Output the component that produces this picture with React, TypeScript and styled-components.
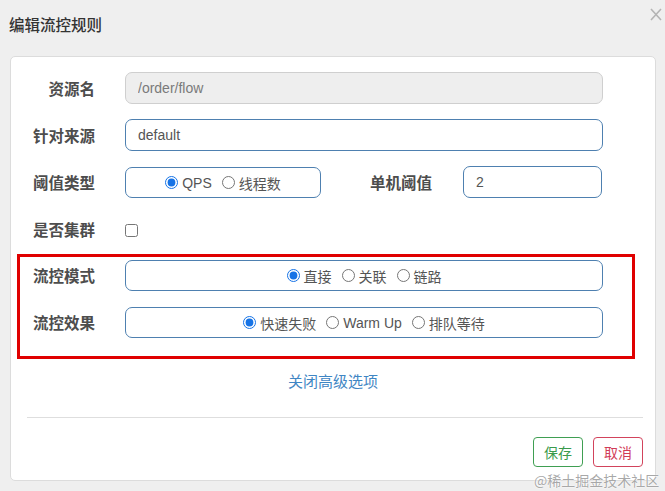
import React from "react";
import styled, { createGlobalStyle } from "styled-components";

const Global = createGlobalStyle`
  html, body { margin: 0; padding: 0; background: #efefef; }
  body { font-family: "Liberation Sans", "Noto Sans CJK SC", sans-serif; color: #555; }
  * { box-sizing: border-box; }
`;

const Page = styled.div`
  position: relative;
  width: 665px;
  height: 491px;
  background: #efefef;
  overflow: hidden;
`;

const Header = styled.div`
  position: relative;
  height: 56px;
  padding: 14px 0 0 9px;
`;

const Title = styled.h4`
  margin: 0;
  font-family: "Noto Sans CJK SC", sans-serif;
  font-size: 15.5px;
  font-weight: 500;
  line-height: 20px;
  color: #333;
`;

const Close = styled.button`
  position: absolute;
  top: 7px;
  right: 2px;
  width: 14px;
  height: 15px;
  padding: 0;
  border: none;
  background: transparent;
  display: flex;
  align-items: center;
  justify-content: center;
`;

const Card = styled.div`
  margin: 0 9px 0 10px;
  height: 425px;
  background: #fff;
  border: 1px solid #dcdcdc;
  border-radius: 5px;
  padding-top: 15px;
  display: flex;
  flex-direction: column;
`;

const Row = styled.div<{ $gap?: number }>`
  display: flex;
  align-items: center;
  height: 32px;
  margin-bottom: ${(p) => (p.$gap ?? 15)}px;
`;

const Label = styled.label<{ $w: number; $after?: number }>`
  width: ${(p) => p.$w}px;
  flex: none;
  text-align: right;
  margin-right: ${(p) => p.$after ?? 30}px;
  font-family: "Noto Sans CJK SC", sans-serif;
  font-size: 15.5px;
  font-weight: 700;
  color: #4d4d4d;
  line-height: 20px;
`;

const TextInput = styled.input<{ $w: number }>`
  width: ${(p) => p.$w}px;
  height: 32px;
  padding: 0 12px;
  border: 1px solid #4e80b0;
  border-radius: 7px;
  background: #fff;
  font-family: "Liberation Sans", "Noto Sans CJK SC", sans-serif;
  font-size: 14px;
  color: #555;
  outline: none;
  &:disabled {
    background: #eee;
    border-color: #cfcfcf;
    color: #7a7a7a;
  }
`;

const RadioBox = styled.div<{ $w: number }>`
  width: ${(p) => p.$w}px;
  height: 31px;
  border: 1px solid #4e80b0;
  border-radius: 7px;
  display: flex;
  align-items: center;
  justify-content: center;
  padding-top: 1px;
`;

const Option = styled.label`
  display: inline-flex;
  align-items: center;
  margin: 0 5px;
  font-family: "Liberation Sans", "Noto Sans CJK SC", sans-serif;
  font-size: 14px;
  color: #555;
  white-space: nowrap;
`;

const Radio = styled.input.attrs({ type: "radio" })`
  width: 13px;
  height: 13px;
  margin: 0 4px 0 0;
  accent-color: #1673e6;
`;

const Check = styled.input.attrs({ type: "checkbox" })`
  width: 13px;
  height: 13px;
  margin: 2px 0 0 0;
`;

const Highlight = styled.div`
  margin: 0 20px 0 6px;
  border: 3px solid #e00000;
  padding: 2px 0 3px;
`;

const Toggle = styled.a`
  display: block;
  margin-top: 12px;
  text-align: center;
  font-family: "Noto Sans CJK SC", sans-serif;
  font-size: 15px;
  line-height: 20px;
  color: #3f86c4;
  text-decoration: none;
`;

const Divider = styled.hr`
  margin: 26px 12px 0 16px;
  border: none;
  border-top: 1px solid #dedede;
`;

const Footer = styled.div`
  display: flex;
  justify-content: flex-end;
  gap: 10px;
  margin: 19px 12px 0 0;
`;

const Btn = styled.button<{ $tone: "ok" | "cancel" }>`
  width: 50px;
  height: 30px;
  padding: 0;
  background: #fff;
  border: 1px solid ${(p) => (p.$tone === "ok" ? "#3f9f52" : "#d2435c")};
  color: ${(p) => (p.$tone === "ok" ? "#3a9a4c" : "#d13c57")};
  border-radius: 4px;
  font-family: "Noto Sans CJK SC", sans-serif;
  font-size: 14px;
`;

const Watermark = styled.div`
  position: absolute;
  left: 534px;
  top: 470px;
  font-family: "Noto Sans CJK SC", sans-serif;
  font-size: 14px;
  line-height: 20px;
  color: rgba(140, 140, 140, 0.75);
  text-shadow: 0 0 1px #fff, 0 0 2px #fff;
  white-space: nowrap;
`;

export default function App() {
  return (
    <Page>
      <Global />
      <Header>
        <Title>编辑流控规则</Title>
        <Close aria-label="close">
          <svg width="12" height="13" viewBox="0 0 12 13">
            <path d="M1 1 L11 12 M11 1 L1 12" stroke="#b4b4b4" strokeWidth="1.6" />
          </svg>
        </Close>
      </Header>
      <Card>
        <Row>
          <Label $w={84}>资源名</Label>
          <TextInput $w={478} disabled defaultValue="/order/flow" />
        </Row>
        <Row>
          <Label $w={84}>针对来源</Label>
          <TextInput $w={478} defaultValue="default" />
        </Row>
        <Row>
          <Label $w={84}>阈值类型</Label>
          <RadioBox $w={196}>
            <Option>
              <Radio name="grade" defaultChecked />
              QPS
            </Option>
            <Option>
              <Radio name="grade" />
              线程数
            </Option>
          </RadioBox>
          <Label $w={111} $after={31}>单机阈值</Label>
          <TextInput $w={139} defaultValue="2" />
        </Row>
        <Row $gap={9}>
          <Label $w={84}>是否集群</Label>
          <Check />
        </Row>
        <Highlight>
          <Row>
            <Label $w={75}>流控模式</Label>
            <RadioBox $w={478}>
              <Option>
                <Radio name="strategy" defaultChecked />
                直接
              </Option>
              <Option>
                <Radio name="strategy" />
                关联
              </Option>
              <Option>
                <Radio name="strategy" />
                链路
              </Option>
            </RadioBox>
          </Row>
          <Row $gap={15}>
            <Label $w={75}>流控效果</Label>
            <RadioBox $w={478}>
              <Option>
                <Radio name="behavior" defaultChecked />
                快速失败
              </Option>
              <Option>
                <Radio name="behavior" />
                Warm Up
              </Option>
              <Option>
                <Radio name="behavior" />
                排队等待
              </Option>
            </RadioBox>
          </Row>
        </Highlight>
        <Toggle href="#">关闭高级选项</Toggle>
        <Divider />
        <Footer>
          <Btn $tone="ok">保存</Btn>
          <Btn $tone="cancel">取消</Btn>
        </Footer>
      </Card>
      <Watermark>@稀土掘金技术社区</Watermark>
    </Page>
  );
}
